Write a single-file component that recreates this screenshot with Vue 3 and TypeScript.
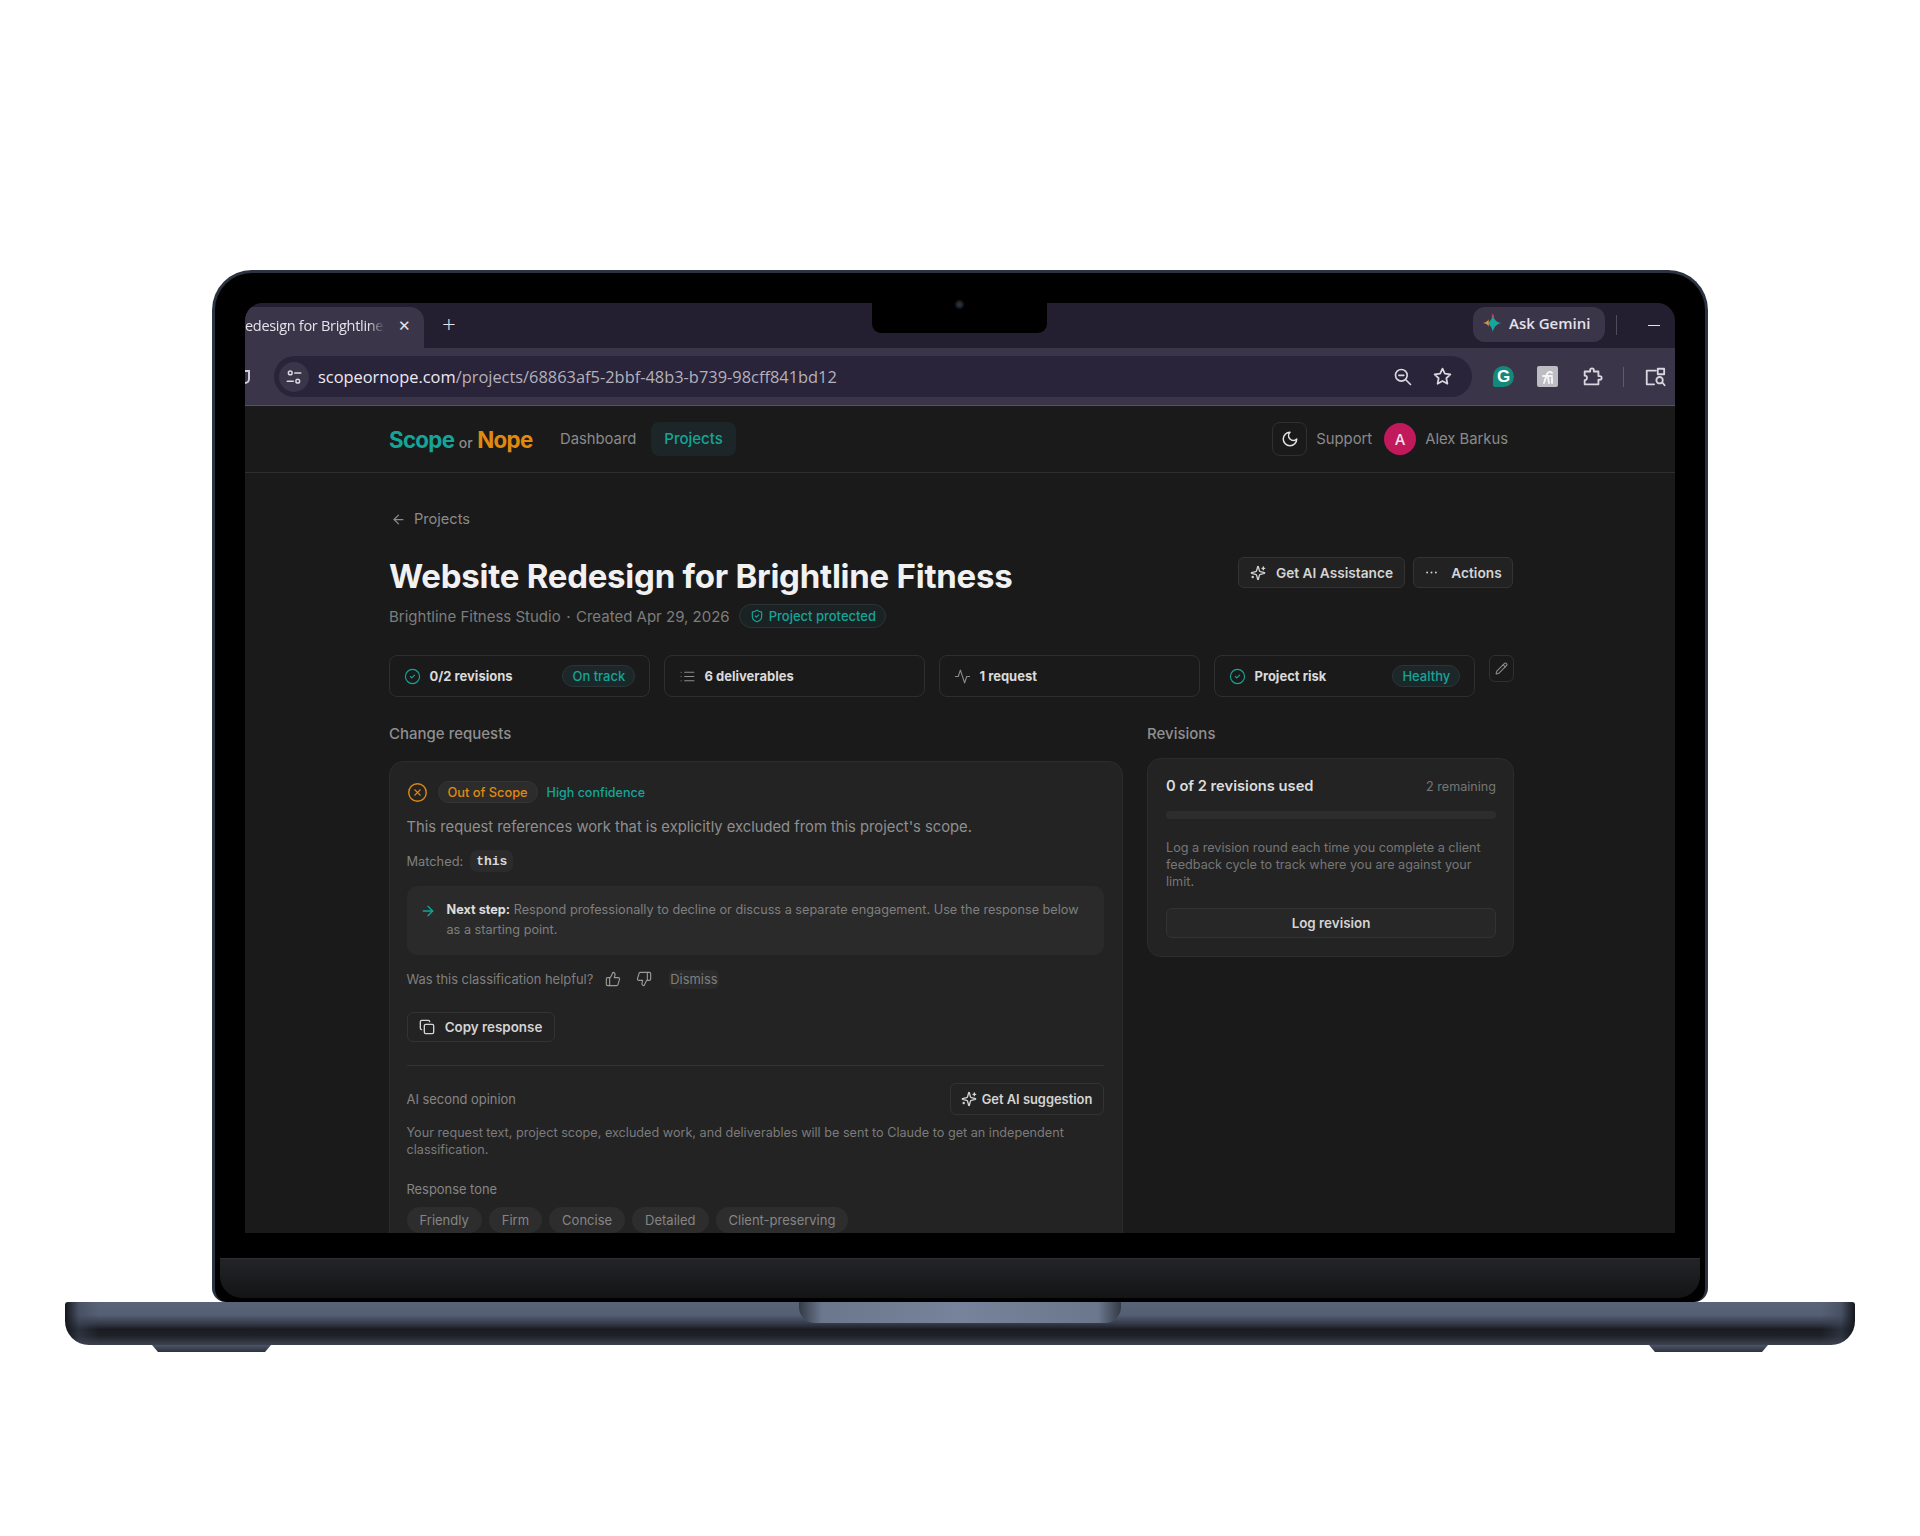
<script setup lang="ts">
import { h } from "vue";

const paths: Record<string, string[]> = {
	moon: ["M12 3a6 6 0 0 0 9 9 9 9 0 1 1-9-9Z"],
	back: ["m12 19-7-7 7-7", "M19 12H5"],
	next: ["M5 12h14", "m12 5 7 7-7 7"],
	sparkles: [
		"M9.937 15.5A2 2 0 0 0 8.5 14.063l-6.135-1.582a.5.5 0 0 1 0-.962L8.5 9.936A2 2 0 0 0 9.937 8.5l1.582-6.135a.5.5 0 0 1 .963 0L14.063 8.5A2 2 0 0 0 15.5 9.937l6.135 1.581a.5.5 0 0 1 0 .964L15.5 14.063a2 2 0 0 0-1.437 1.437l-1.582 6.135a.5.5 0 0 1-.963 0z",
		"M20 3v4",
		"M22 5h-4",
		"M4 17v2",
		"M5 18H3",
	],
	dots: ["M5 12h.01", "M12 12h.01", "M19 12h.01"],
	pencil: [
		"M21.174 6.812a1 1 0 0 0-3.986-3.987L3.842 16.174a2 2 0 0 0-.5.83l-1.321 4.352a.5.5 0 0 0 .623.622l4.353-1.32a2 2 0 0 0 .83-.497z",
		"m15 5 4 4",
	],
	check: ["M12 2a10 10 0 1 0 0 20a10 10 0 1 0 0-20", "m9 12 2 2 4-4"],
	list: ["M3 12h.01", "M3 18h.01", "M3 6h.01", "M8 12h13", "M8 18h13", "M8 6h13"],
	activity: ["M22 12h-4l-3 9L9 3l-3 9H2"],
	shield: [
		"M20 13c0 5-3.5 7.5-7.66 8.95a1 1 0 0 1-.67-.01C7.5 20.5 4 18 4 13V6a1 1 0 0 1 1-1c2 0 4.5-1.2 6.24-2.72a1.17 1.17 0 0 1 1.52 0C14.51 3.81 17 5 19 5a1 1 0 0 1 1 1z",
		"m9 12 2 2 4-4",
	],
	cross: ["M12 2a10 10 0 1 0 0 20a10 10 0 1 0 0-20", "m15 9-6 6", "m9 9 6 6"],
	up: [
		"M7 10v12",
		"M15 5.88 14 10h5.83a2 2 0 0 1 1.92 2.56l-2.33 8A2 2 0 0 1 17.5 22H4a2 2 0 0 1-2-2v-8a2 2 0 0 1 2-2h2.76a2 2 0 0 0 1.79-1.11L12 2a3.13 3.13 0 0 1 3 3.88Z",
	],
	down: [
		"M17 14V2",
		"M9 18.12 10 14H4.17a2 2 0 0 1-1.92-2.56l2.33-8A2 2 0 0 1 6.5 2H20a2 2 0 0 1 2 2v8a2 2 0 0 1-2 2h-2.76a2 2 0 0 0-1.79 1.11L12 22a3.13 3.13 0 0 1-3-3.88Z",
	],
	copy: [
		"M10 8h10a2 2 0 0 1 2 2v10a2 2 0 0 1-2 2H10a2 2 0 0 1-2-2V10a2 2 0 0 1 2-2Z",
		"M4 16c-1.1 0-2-.9-2-2V4c0-1.1.9-2 2-2h10c1.1 0 2 .9 2 2",
	],
	zoom: ["M10 3a7 7 0 1 0 0 14a7 7 0 1 0 0-14", "m21 21-6-6", "M7 10h6"],
	star: ["M12 3l2.7 5.8 6.3.8-4.6 4.4 1.2 6.3L12 17.2l-5.6 3.1 1.2-6.3L3 9.6l6.3-.8z"],
	puzzle: ["M4 6h6V4.5a2 2 0 0 1 4 0V6h5v5h1.5a2 2 0 0 1 0 4H19v5H4v-4.5a2.5 2.5 0 0 0 0-5z"],
	panel: ["M13 5H3v15h8", "M15 3h7v6h-7z", "M17 12a3.5 3.5 0 1 0 0 7a3.5 3.5 0 1 0 0-7", "m20 18 2.5 3"],
	tune: ["M7 4a2.5 2.5 0 1 0 0 5a2.5 2.5 0 1 0 0-5", "M13 6.5h8", "M17 15a2.5 2.5 0 1 0 0 5a2.5 2.5 0 1 0 0-5", "M3 17.5h8"],
};

const Icon = (props: { name: string; size?: number; sw?: number }) =>
	h(
		"svg",
		{
			width: props.size ?? 16,
			height: props.size ?? 16,
			viewBox: "0 0 24 24",
			fill: "none",
			stroke: "currentColor",
			"stroke-width": props.sw ?? 2,
			"stroke-linecap": "round",
			"stroke-linejoin": "round",
			style: "flex-shrink:0;display:block",
		},
		paths[props.name].map((d) => h("path", { d })),
	);
Icon.props = ["name", "size", "sw"];

const metrics = [
	{ icon: "check", label: "0/2 revisions", badge: "On track", teal: true },
	{ icon: "list", label: "6 deliverables", badge: "", teal: false },
	{ icon: "activity", label: "1 request", badge: "", teal: false },
	{ icon: "check", label: "Project risk", badge: "Healthy", teal: true },
];

const tones = ["Friendly", "Firm", "Concise", "Detailed", "Client-preserving"];
</script>

<template>
	<div class="stage">
		<div class="lid">
			<div class="notch"><span class="camera"></span></div>
			<div class="screen">
				<div class="tabstrip">
					<div class="tab">
						<span class="tab_title">edesign for Brightline</span>
						<span class="tab_close">✕</span>
					</div>
					<span class="tab_new">+</span>
					<div class="strip_gap"></div>
					<div class="gemini">
						<svg width="20" height="22" viewBox="0 0 24 26">
							<path d="M13 3c1 6 5 9 10 10-5 1-9 5-10 11-1-6-4-10-8-11 4-1 7-4 8-10z" fill="#17a69c"/>
							<path d="M8 8.500c-1 2-3 4-7 4.500 4 .5 6 2 7 4.500z" fill="#e0913a"/>
							<path d="M13 1c.4 2 1 3.500 2 4.500h-4c1-1 1.600-2.500 2-4.500z" fill="#d8435a"/>
						</svg>
						Ask Gemini
					</div>
					<span class="strip_sep"></span>
					<span class="win_min"></span>
				</div>
				<div class="toolbar">
					<span class="cut_icon"></span>
					<div class="omni">
						<span class="site_btn"><Icon name="tune" :size="18" /></span>
						<span class="url"><b>scopeornope.com</b>/projects/68863af5-2bbf-48b3-b739-98cff841bd12</span>
						<div class="omni_gap"></div>
						<Icon name="zoom" :size="20" class="tool_ic" />
						<Icon name="star" :size="21" class="tool_ic star" />
					</div>
					<div class="ext">
						<span class="grammarly">G</span>
						<span class="ext_box">
							<svg width="14" height="16" viewBox="0 0 14 16" fill="none" stroke="#f4f4f4" stroke-width="2" stroke-linecap="round">
								<path d="M3 14 6 5c1-2.500 4-2.500 5-1"/>
								<path d="M2 7h9"/>
								<path d="M7 8l1 6"/>
								<path d="M11 9v5"/>
							</svg>
						</span>
						<Icon name="puzzle" :size="22" class="tool_ic" />
						<span class="ext_sep"></span>
						<Icon name="panel" :size="22" class="tool_ic" />
					</div>
				</div>

				<div class="page">
					<header class="nav">
						<div class="nav_in">
							<div class="logo"><span class="scope">Scope</span> <small>or</small> <span class="nope">Nope</span></div>
							<a class="nav_link">Dashboard</a>
							<a class="nav_link active">Projects</a>
							<div class="nav_gap"></div>
							<span class="moon"><Icon name="moon" :size="18" /></span>
							<a class="nav_link plain">Support</a>
							<span class="avatar">A</span>
							<span class="user">Alex Barkus</span>
						</div>
					</header>

					<main class="main">
						<div class="back"><Icon name="back" :size="15" />Projects</div>

						<div class="title_row">
							<h1>Website Redesign for Brightline Fitness</h1>
							<div class="title_btns">
								<button class="btn ai"><Icon name="sparkles" :size="16" />Get AI Assistance</button>
								<button class="btn act"><Icon name="dots" :size="15" :sw="3" />Actions</button>
							</div>
						</div>

						<div class="sub">
							<span>Brightline Fitness Studio</span>
							<span class="dot">·</span>
							<span>Created Apr 29, 2026</span>
							<span class="protected"><Icon name="shield" :size="14" />Project protected</span>
						</div>

						<div class="metrics">
							<div class="metric" v-for="m in metrics" :key="m.label">
								<span :class="m.teal ? 'teal' : 'muted'"><Icon :name="m.icon" :size="17" :sw="1.6" /></span>
								<strong>{{ m.label }}</strong>
								<span class="badge" v-if="m.badge">{{ m.badge }}</span>
							</div>
							<button class="edit"><Icon name="pencil" :size="13" /></button>
						</div>

						<div class="columns">
							<section>
								<h2>Change requests</h2>
								<div class="card request">
									<div class="verdict">
										<span class="orange"><Icon name="cross" :size="21" :sw="1.6" /></span>
										<span class="scope_pill">Out of Scope</span>
										<span class="conf">High confidence</span>
									</div>
									<p class="reason">This request references work that is explicitly excluded from this project's scope.</p>
									<div class="matched">Matched: <code>this</code></div>
									<div class="next">
										<span class="teal"><Icon name="next" :size="16" /></span>
										<p><b>Next step:</b> Respond professionally to decline or discuss a separate engagement. Use the response below as a starting point.</p>
									</div>
									<div class="helpful">
										<span>Was this classification helpful?</span>
										<span class="thumb"><Icon name="up" :size="16" :sw="1.7" /></span>
										<span class="thumb"><Icon name="down" :size="16" :sw="1.7" /></span>
										<span class="dismiss">Dismiss</span>
									</div>
									<button class="btn copy"><Icon name="copy" :size="16" />Copy response</button>
									<hr />
									<div class="second">
										<span>AI second opinion</span>
										<button class="btn suggest"><Icon name="sparkles" :size="16" />Get AI suggestion</button>
									</div>
									<p class="note">Your request text, project scope, excluded work, and deliverables will be sent to Claude to get an independent classification.</p>
									<div class="tone_label">Response tone</div>
									<div class="tones">
										<span class="tone" v-for="t in tones" :key="t">{{ t }}</span>
									</div>
								</div>
							</section>

							<section>
								<h2>Revisions</h2>
								<div class="card revisions">
									<div class="rev_head">
										<strong>0 of 2 revisions used</strong>
										<span>2 remaining</span>
									</div>
									<div class="bar"></div>
									<p>Log a revision round each time you complete a client feedback cycle to track where you are against your limit.</p>
									<button class="btn log">Log revision</button>
								</div>
							</section>
						</div>
					</main>
				</div>
			</div>
			<div class="chin"></div>
		</div>
		<div class="base"><div class="hinge"></div></div>
		<div class="feet"><span></span><span></span></div>
	</div>
</template>

<style>
html, body {
	margin: 0;
	background: #fff;
}
</style>

<style scoped>
* {
	box-sizing: border-box;
}

.stage {
	height: 1536px;
	padding-top: 270px;
	display: flex;
	flex-direction: column;
	align-items: center;
	background: #fff;
	overflow: hidden;
	font-family: Inter, "Liberation Sans", sans-serif;
}

.lid {
	position: relative;
	width: 1496px;
	height: 1032px;
	padding-top: 30px;
	display: flex;
	flex-direction: column;
	background: #000;
	border: 3px solid #2b3240;
	border-bottom: 0;
	border-radius: 40px 40px 14px 14px;
}

.notch {
	position: absolute;
	top: 0;
	left: 657px;
	width: 175px;
	height: 60px;
	background: #000;
	border-radius: 0 0 9px 9px;
	z-index: 2;
}

.camera {
	position: absolute;
	left: 83px;
	top: 27px;
	width: 9px;
	height: 9px;
	border-radius: 50%;
	background: #28303c;
	border: 2px solid #141920;
}

.screen {
	height: 930px;
	margin: 0 30px;
	border-radius: 18px 18px 0 0;
	overflow: hidden;
	display: flex;
	flex-direction: column;
	background: #1a1a1a;
}

.chin {
	height: 40px;
	margin: 25px 5px 4px;
	background: linear-gradient(#222427, #131415);
	border-top: 1px solid #2f2f2f;
	border-radius: 0 0 22px 22px;
}

.base {
	width: 1790px;
	height: 43px;
	display: flex;
	justify-content: center;
	flex-shrink: 0;
	border-radius: 3px 3px 24px 24px;
	background:
		linear-gradient(90deg, #14171c 0, rgba(60, 68, 84, 0.5) 14px, transparent 34px, transparent calc(100% - 34px), rgba(60, 68, 84, 0.5) calc(100% - 14px), #14171c 100%),
		linear-gradient(#5a6479 0, #555f74 30%, #343b49 50%, #191c21 64%, #1e2127 78%, #3c424f 100%);
}

.hinge {
	width: 322px;
	height: 21px;
	border-radius: 0 0 16px 16px;
	background: linear-gradient(90deg, #333a47 0, #6a778c 7%, #76839a 50%, #6a778c 93%, #333a47 100%);
}

.feet {
	width: 1616px;
	display: flex;
	justify-content: space-between;
}

.feet span {
	width: 119px;
	height: 7px;
	background: linear-gradient(#4b5468, #2d323d);
	clip-path: polygon(0 0, 100% 0, 95% 100%, 5% 100%);
}

/* browser chrome */
.tabstrip {
	height: 45px;
	display: flex;
	align-items: flex-end;
	background: #231f31;
	color: #e4e2ea;
	font-family: "Open Sans", "Noto Sans", sans-serif;
	flex-shrink: 0;
}

.tab {
	width: 179px;
	height: 41px;
	display: flex;
	align-items: center;
	justify-content: space-between;
	padding: 0 13px 5px 0;
	background: #3b3549;
	border-radius: 0 14px 0 0;
	font-size: 14.5px;
}

.tab_title {
	width: 140px;
	overflow: hidden;
	white-space: nowrap;
	letter-spacing: -0.3px;
	-webkit-mask-image: linear-gradient(90deg, #000 88%, transparent);
	mask-image: linear-gradient(90deg, #000 88%, transparent);
}

.tab_close {
	font-size: 15px;
}

.tab_new {
	margin-left: 18px;
	height: 42px;
	font-size: 24px;
	line-height: 36px;
	font-weight: 300;
}

.strip_gap {
	flex: 1;
}

.gemini {
	width: 132px;
	height: 35px;
	margin-bottom: 6px;
	padding: 0 0 3px 9px;
	display: flex;
	align-items: center;
	gap: 7px;
	background: #3b3549;
	border-radius: 12px;
	font-size: 15px;
	font-weight: 600;
	white-space: nowrap;
}

.strip_sep {
	width: 1px;
	height: 20px;
	margin: 0 0 13px 11px;
	background: #4f4a5e;
}

.win_min {
	width: 12px;
	height: 1.5px;
	margin: 0 15px 22px 31px;
	background: #e4e2ea;
}

.toolbar {
	height: 58px;
	display: flex;
	align-items: center;
	background: #3b3549;
	border-bottom: 1px solid #56525f;
	flex-shrink: 0;
}

.cut_icon {
	width: 5px;
	height: 14px;
	margin-right: 24px;
	border: 2px solid #cfcdd6;
	border-left: 0;
	border-radius: 0 0 5px 0;
}

.omni {
	width: 1198px;
	height: 41px;
	padding: 0 19px 0 5px;
	display: flex;
	align-items: center;
	background: #29243a;
	border-radius: 21px;
	color: #d8d6de;
}

.site_btn {
	width: 30px;
	height: 30px;
	display: flex;
	align-items: center;
	justify-content: center;
	background: #3b3549;
	border-radius: 50%;
}

.url {
	margin-left: 9px;
	font-family: "Open Sans", "Noto Sans", sans-serif;
	font-size: 16.4px;
	color: #b4b1bc;
	white-space: nowrap;
}

.url b {
	font-weight: 400;
	color: #eceaf0;
}

.omni_gap {
	flex: 1;
}

.tool_ic {
	color: #d8d6de;
}

.star {
	margin-left: 19px;
}

.ext {
	display: flex;
	align-items: center;
	margin-left: 21px;
	color: #d8d6de;
}

.grammarly {
	width: 21px;
	height: 21px;
	display: flex;
	align-items: center;
	justify-content: center;
	margin-right: 23px;
	background: #12897a;
	border-radius: 50% 50% 50% 2px;
	color: #fff;
	font: 700 17px "Liberation Sans", sans-serif;
}

.ext_box {
	width: 21px;
	height: 21px;
	margin-right: 23px;
	display: flex;
	align-items: center;
	justify-content: center;
	background: #bdbcc2;
	border-radius: 2px;
}

.ext_sep {
	width: 1px;
	height: 20px;
	margin: 0 20px;
	background: #55606a;
}

/* app page */
.page {
	flex: 1;
	min-height: 0;
	background: #1a1a1a;
	color: #8a8a8a;
}

.nav {
	height: 67px;
	border-bottom: 1px solid #2e2e2e;
}

.nav_in {
	width: 1125px;
	height: 100%;
	margin-left: 144px;
	display: flex;
	align-items: center;
	font-size: 14.8px;
}

.logo {
	width: 171px;
	font-size: 22.3px;
	font-weight: 700;
	letter-spacing: -0.7px;
	white-space: nowrap;
}

.logo small {
	font-size: 14px;
	font-weight: 500;
	color: #8a8a8a;
	letter-spacing: 0;
}

.scope {
	color: #14a598;
}

.nope {
	color: #e0890f;
}

.nav_link {
	height: 34px;
	line-height: 34px;
	color: #8a8a8a;
	white-space: nowrap;
}

.nav_link.active {
	margin-left: 15px;
	padding: 0 13px;
	background: #1c2628;
	border-radius: 8px;
	color: #14a598;
	font-size: 15px;
	font-weight: 500;
}

.nav_link.plain {
	margin-left: 9px;
}

.nav_gap {
	flex: 1;
}

.moon {
	width: 35px;
	height: 34px;
	display: flex;
	align-items: center;
	justify-content: center;
	border: 1px solid #303030;
	border-radius: 8px;
	color: #e2e2e2;
}

.avatar {
	width: 32px;
	height: 32px;
	margin-left: 12px;
	display: flex;
	align-items: center;
	justify-content: center;
	background: #c2195c;
	border-radius: 50%;
	color: #f2e4ea;
	font-size: 15px;
	font-weight: 500;
}

.user {
	margin: 0 6px 0 9px;
	white-space: nowrap;
}

.main {
	width: 1125px;
	margin-left: 144px;
	padding-top: 36px;
}

.back {
	height: 20px;
	display: flex;
	align-items: center;
	gap: 8px;
	padding-left: 2px;
	font-size: 14.6px;
}

.title_row {
	display: flex;
	justify-content: space-between;
	align-items: flex-start;
	margin-top: 28px;
}

h1 {
	margin: 0;
	font-size: 33px;
	line-height: 39px;
	font-weight: 700;
	letter-spacing: -0.25px;
	color: #f1f1f1;
}

.title_btns {
	display: flex;
	gap: 8px;
	margin-right: 1px;
}

.btn {
	display: flex;
	align-items: center;
	justify-content: center;
	background: #222;
	border: 1px solid #333;
	border-radius: 6px;
	color: #d4d4d4;
	font-family: inherit;
	font-size: 13.7px;
	font-weight: 600;
	white-space: nowrap;
	padding: 0;
}

.ai {
	width: 167px;
	height: 31px;
	gap: 10px;
}

.act {
	width: 100px;
	height: 31px;
	gap: 12px;
}

.sub {
	margin-top: 8px;
	height: 24px;
	display: flex;
	align-items: center;
	font-size: 15px;
	color: #7d7d7d;
}

.dot {
	margin: 0 5.5px;
}

.protected {
	height: 24px;
	margin-left: 9px;
	padding: 0 9px 0 10px;
	display: flex;
	align-items: center;
	gap: 5px;
	background: #1b2224;
	border: 1px solid #2d3436;
	border-radius: 12px;
	color: #14a598;
	font-size: 13px;
	font-weight: 500;
}

.metrics {
	margin-top: 27px;
	display: grid;
	grid-template-columns: repeat(4, 1fr) 25px;
	gap: 13.75px;
}

.metric {
	height: 42px;
	padding: 0 14px;
	display: flex;
	align-items: center;
	gap: 8.5px;
	border: 1px solid #2e2e2e;
	border-radius: 8px;
	color: #dadada;
	font-size: 13px;
}

.metric strong {
	flex: 1;
	font-weight: 700;
	white-space: nowrap;
}

.teal {
	color: #14a598;
}

.muted {
	color: #8c8c8c;
}

.orange {
	color: #e0890f;
}

.badge {
	height: 22px;
	padding: 0 9px;
	display: flex;
	align-items: center;
	background: #1c2729;
	border: 1px solid #2b3436;
	border-radius: 11px;
	color: #14a598;
	font-size: 13px;
	font-weight: 500;
}

.edit {
	width: 25px;
	height: 27px;
	padding: 0;
	display: flex;
	align-items: center;
	justify-content: center;
	background: none;
	border: 1px solid #303030;
	border-radius: 6px;
	color: #8c8c8c;
}

.columns {
	margin-top: 27px;
	display: grid;
	grid-template-columns: 734px 367px;
	gap: 24px;
}

h2 {
	margin: 0;
	font-size: 15px;
	line-height: 20px;
	font-weight: 500;
	color: #8f8f8f;
}

.card {
	background: #232323;
	border: 1px solid #2c2c2c;
	border-radius: 14px;
}

.request {
	margin-top: 17px;
	padding: 19px 18.5px 40px 16.5px;
}

.verdict {
	height: 22px;
	display: flex;
	align-items: center;
}

.scope_pill {
	height: 22px;
	margin-left: 10px;
	padding: 0 9px;
	display: flex;
	align-items: center;
	background: #2c2c2c;
	border: 1px solid #353535;
	border-radius: 11px;
	color: #e0890f;
	font-size: 12.8px;
	font-weight: 500;
}

.conf {
	margin-left: 9px;
	color: #14a598;
	font-size: 12.5px;
	font-weight: 500;
}

.reason {
	margin: 14px 0 0;
	font-size: 14.75px;
	line-height: 20px;
	color: #8f8f8f;
}

.matched {
	margin-top: 13px;
	height: 22px;
	display: flex;
	align-items: center;
	gap: 7px;
	font-size: 12.8px;
	color: #808080;
}

code {
	height: 22px;
	padding: 0 6px;
	display: flex;
	align-items: center;
	background: #2b2b2b;
	border-radius: 7px;
	color: #d8d8d8;
	font: 700 13px "Liberation Mono", monospace;
}

.next {
	margin-top: 14px;
	height: 69px;
	padding: 14px 20px 0 13px;
	display: flex;
	gap: 11px;
	background: #2a2a2a;
	border-radius: 10px;
}

.next p {
	margin: 0;
	font-size: 12.7px;
	line-height: 20px;
	color: #7f7f7f;
}

.next b {
	color: #dcdcdc;
	font-weight: 700;
}

.next .teal {
	margin-top: 3px;
}

.helpful {
	margin-top: 12px;
	height: 24px;
	display: flex;
	align-items: center;
	font-size: 12.9px;
	color: #7f7f7f;
}

.thumb {
	width: 22px;
	height: 24px;
	margin-left: 9px;
	display: flex;
	align-items: center;
	justify-content: center;
	border-radius: 10px;
	color: #9a9a9a;
}

.dismiss {
	margin-left: 14px;
	padding: 2px 1px;
	background: #2b2b2b;
	border-radius: 6px;
}

.copy {
	width: 148px;
	height: 30px;
	margin-top: 21px;
	gap: 10px;
	background: none;
	font-size: 13.4px;
}

hr {
	margin: 23px 0 0;
	border: 0;
	border-top: 1px solid #333;
}

.second {
	margin-top: 17px;
	display: flex;
	justify-content: space-between;
	align-items: center;
	font-size: 12.9px;
	color: #858585;
}

.suggest {
	width: 154px;
	height: 32px;
	gap: 5px;
	background: none;
	font-size: 12.9px;
}

.note {
	margin: 9px 0 0;
	font-size: 12.65px;
	line-height: 17px;
	color: #7b7b7b;
}

.tone_label {
	margin-top: 23px;
	font-size: 12.9px;
	line-height: 18px;
	color: #858585;
}

.tones {
	margin-top: 8px;
	display: flex;
	gap: 7px;
}

.tone {
	height: 26px;
	padding: 0 13px;
	display: flex;
	align-items: center;
	background: #2d2d2d;
	border-radius: 13px;
	font-size: 13px;
	color: #858585;
}

.revisions {
	margin-top: 14px;
	height: 199px;
	padding: 17px 17px 17px 18px;
}

.rev_head {
	height: 20px;
	display: flex;
	justify-content: space-between;
	align-items: center;
	font-size: 12.6px;
	color: #767676;
}

.rev_head strong {
	font-size: 14.7px;
	font-weight: 600;
	color: #dcdcdc;
}

.bar {
	height: 8px;
	margin-top: 15px;
	background: #2d2d2d;
	border-radius: 4px;
}

.revisions p {
	margin: 20px 0 0;
	font-size: 12.65px;
	line-height: 17px;
	color: #767676;
}

.log {
	width: 100%;
	height: 30px;
	margin-top: 18px;
	background: #272727;
	font-size: 13.4px;
}
</style>
